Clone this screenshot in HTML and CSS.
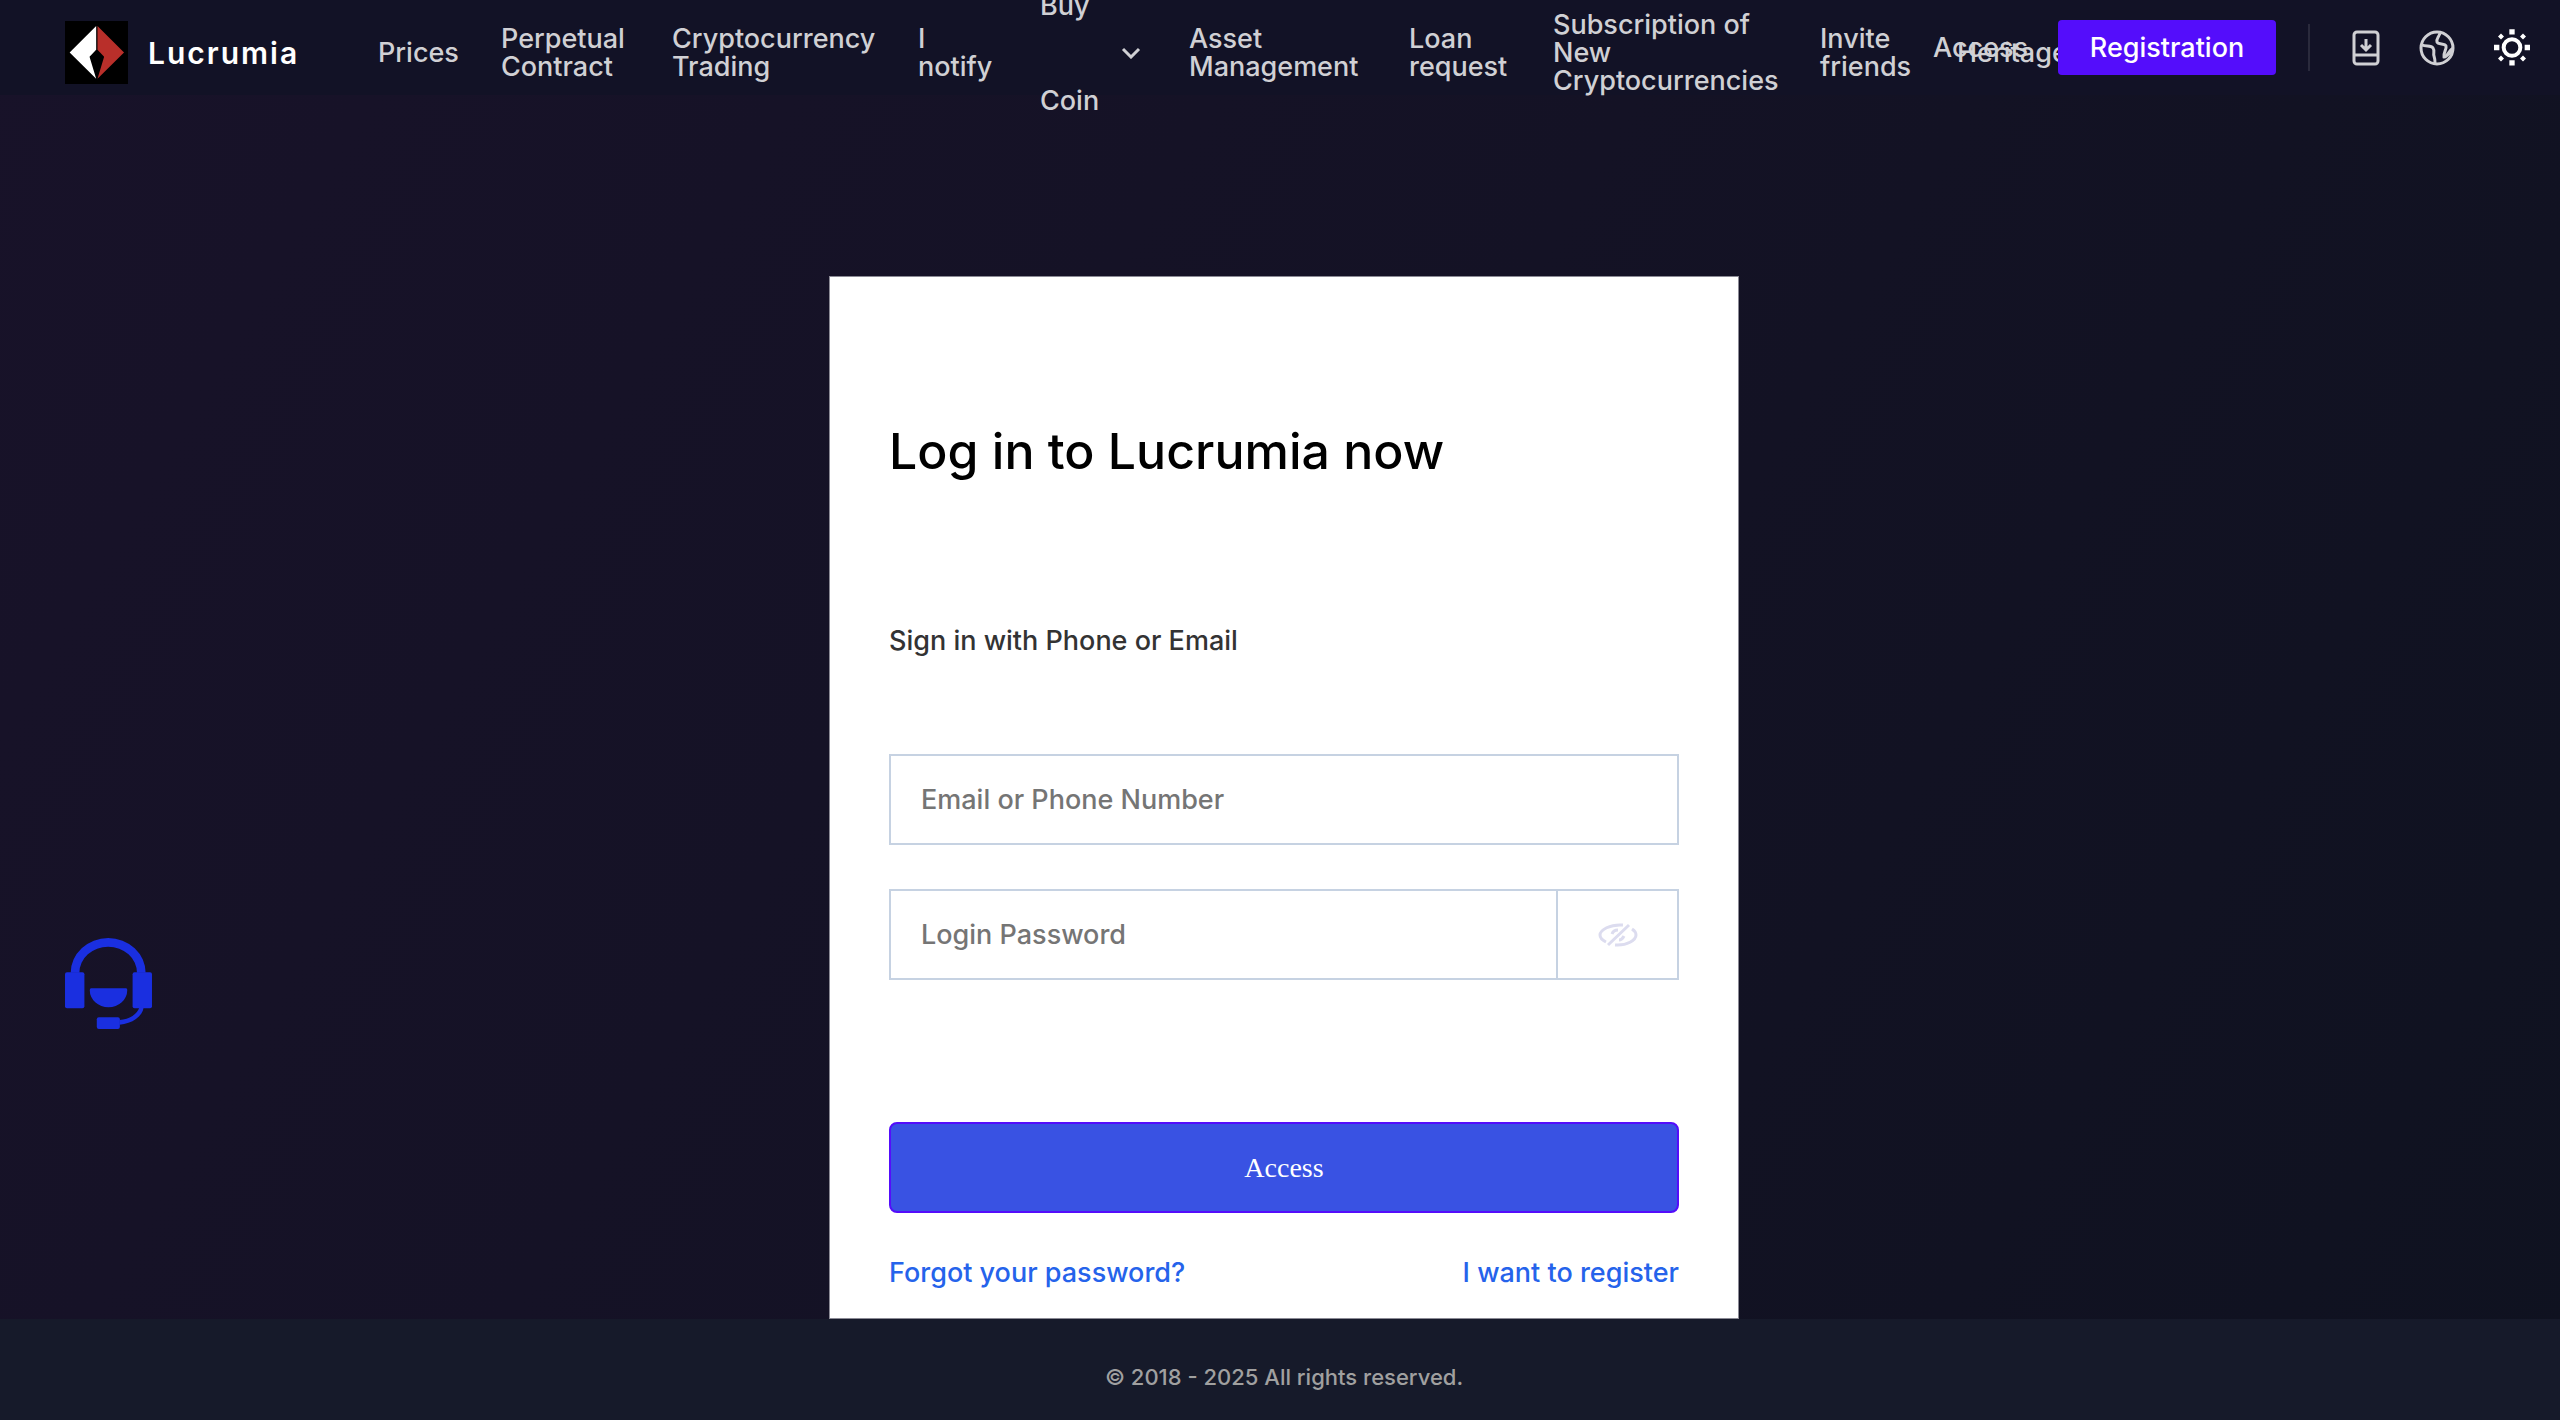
FILE: index.html
```html
<!DOCTYPE html>
<html lang="en">
<head>
    <meta charset="UTF-8">
    <meta name="viewport" content="width=device-width, initial-scale=1.0">
    <title>Lucrumia - Log in</title>
    <link rel="stylesheet" href="styles.css">
</head>
<body>

<header class="header">
    <a class="brand" href="#">
        <svg class="brand-logo" viewBox="0 0 190 190" aria-hidden="true">
            <rect width="190" height="190" fill="#000"/>
            <path d="M94 15 14 95l80 79-20-66 20-21z" fill="#fff"/>
            <path d="M98 15l80 80-80 79 20-66-20-21z" fill="#b92f2a"/>
        </svg>
        <span>Lucrumia</span>
    </a>

    <nav class="nav">
        <a href="#">Prices</a>
        <a href="#">Perpetual Contract</a>
        <a href="#">Cryptocurrency Trading</a>
        <a href="#">I notify</a>
        <a class="nav-drop" href="#">
            <span>Buy Coin</span>
            <svg viewBox="0 0 20 12" aria-hidden="true"><path d="M2 2l8 8 8-8"/></svg>
        </a>
        <a href="#">Asset Management</a>
        <a href="#">Loan request</a>
        <a href="#">Subscription of New Cryptocurrencies</a>
        <a href="#">Invite friends</a>
        <a href="#">Heritage</a>
    </nav>

    <div class="actions">
        <a class="access" href="#">Access</a>
        <button class="register" type="button">Registration</button>
        <span class="divider"></span>
        <button class="icon-btn" type="button" aria-label="Download">
            <svg width="28" height="36" viewBox="0 0 28 36">
                <rect x="2" y="2" width="24" height="32" rx="3"/>
                <path d="M2 25h24M14 9v10M9 15l5 5 5-5"/>
            </svg>
        </button>
        <button class="icon-btn" type="button" aria-label="Language">
            <svg width="36" height="36" viewBox="0 0 36 36">
                <circle cx="18" cy="18" r="16"/>
                <path d="M21 3c-1 4-4 6-3 9s8 1 9 4-3 7-2 11c3 1 4-6 9-9M3 15c4 2 9 0 11 3s0 5 1 8c1 3 1 4 1 7M26 27c3-2 6-4 7-8"/>
            </svg>
        </button>
        <button class="icon-btn sun" type="button" aria-label="Theme">
            <svg width="36" height="37" viewBox="0 0 108 110">
                <circle cx="54" cy="55" r="25"/>
                <path d="M46 0h16v16H46zM46 93h16v16H46zM0 47h16v16H0zM92 47h16v16H92zM21 13l9 9-9 9-9-9zM87 13l9 9-9 9-9-9zM21 79l9 9-9 9-9-9zM87 79l9 9-9 9-9-9z"/>
            </svg>
        </button>
    </div>
</header>

<main class="main">
    <form class="card">
        <h1>Log in to Lucrumia now</h1>
        <p class="subtitle">Sign in with Phone or Email</p>
        <div class="field">
            <input type="text" placeholder="Email or Phone Number" aria-label="Email or Phone Number">
        </div>
        <div class="field">
            <input type="password" placeholder="Login Password" aria-label="Login Password">
            <button class="eye" type="button" aria-label="Show password">
                <svg width="40" height="24" viewBox="0 0 40 24">
                    <path d="M8 19C4 17 2 14 2 12 2 7 12 1 25 2M34 6c3 2 4 4 4 6 0 5-9 11-21 10M31 2 10 22M14 11c1-3 3-4 6-4M26 13c-1 2-3 4-5 4"/>
                </svg>
            </button>
        </div>
        <button class="submit" type="submit">Access</button>
        <div class="links">
            <a href="#">Forgot your password?</a>
            <a href="#">I want to register</a>
        </div>
    </form>
</main>

<footer class="footer">© 2018 - 2025 All rights reserved.</footer>

<button class="support" type="button" aria-label="Customer service">
    <svg width="87" height="91" viewBox="76 84 260 272">
        <path d="M93 188a112 104 0 0 1 224 0h-26a86 78 0 0 0-172 0z"/>
        <rect x="76" y="186" width="58" height="108" rx="6"/>
        <rect x="278" y="186" width="58" height="108" rx="6"/>
        <path d="M154 234h104q5 0 4 6a56 51 0 0 1-112 0q0-6 4-6z"/>
        <rect x="171" y="321" width="69" height="35" rx="6"/>
        <path d="M298 292h13c-3 26-34 49-72 51v-14c30-1 54-18 59-37z"/>
    </svg>
</button>

</body>
</html>
```
FILE: styles.css
```css
* {
    box-sizing: border-box;
}
body {
    margin: 0;
    min-height: 100vh;
    display: flex;
    flex-direction: column;
    font-family: Inter, "Noto Sans", sans-serif;
    font-size: 27px;
    font-weight: 500;
    background: linear-gradient(120deg, #181229 0%, #141225 50%, #0f1220 100%);
}
a {
    text-decoration: none;
}
button {
    font: inherit;
    border: none;
    padding: 0;
    background: none;
    cursor: pointer;
}
svg {
    display: block;
}

/* header */
.header {
    position: relative;
    display: flex;
    height: 95px;
    padding: 10px 28px 0 65px;
    background: #121226;
}
.brand {
    display: flex;
    align-items: center;
    gap: 20px;
    width: 313px;
    color: #fff;
    font-size: 30px;
    font-weight: 600;
    letter-spacing: 2px;
}
.brand-logo {
    width: 63px;
    height: 63px;
}
.nav {
    display: grid;
    grid-template-columns: 75px 123px 198px 74px 101px 172px 96px 219px 89px auto;
    grid-template-rows: 85px;
    column-gap: 48px;
    align-items: center;
    height: 85px;
    line-height: 28px;
}
.nav a,
.access {
    color: #d0d0d4;
}
.nav .nav-drop {
    display: flex;
    align-items: center;
    justify-content: space-between;
    line-height: 95px;
}
.nav-drop span {
    width: 60px;
}
.nav-drop svg {
    width: 20px;
    height: 12px;
    fill: none;
    stroke: #d0d0d4;
    stroke-width: 3;
}
.actions {
    position: absolute;
    top: 0;
    right: 30px;
    display: flex;
    align-items: center;
    height: 95px;
}
.access {
    margin-right: 30px;
}
.register {
    width: 218px;
    height: 55px;
    border-radius: 4px;
    background: #540dfb;
    color: #fff;
}
.divider {
    width: 2px;
    height: 47px;
    margin: 0 42px 0 32px;
    background: #2a2a3c;
}
.icon-btn {
    margin-right: 39px;
}
.icon-btn svg {
    fill: none;
    stroke: #d0d0d4;
    stroke-width: 3;
}
.icon-btn.sun {
    margin-right: 0;
}
.sun circle {
    stroke: #fff;
    stroke-width: 12;
}
.sun path {
    fill: #fff;
    stroke: none;
}

/* login card */
.main {
    flex: 1;
    display: flex;
    justify-content: center;
    padding: 181px 0 0 8px;
}
.card {
    width: 910px;
    padding: 139px 59px 0;
    background: #fff;
    border: 1px solid #8b8a95;
}
h1 {
    margin: 0;
    font-size: 50px;
    font-weight: 500;
    line-height: 70px;
    color: #000;
}
.subtitle {
    margin: 135px 0 93px;
    line-height: 40px;
    color: #333;
}
.field {
    display: flex;
    height: 91px;
    margin-bottom: 44px;
    border: 2px solid #c6d2e2;
}
.field input {
    flex: 1;
    min-width: 0;
    padding: 0 30px;
    border: none;
    outline: none;
    background: none;
    font: inherit;
    color: #333;
}
.field input::placeholder {
    color: #757575;
    opacity: 1;
}
.eye {
    display: flex;
    align-items: center;
    justify-content: center;
    width: 121px;
    border-left: 2px solid #c6d2e2;
}
.eye svg {
    fill: none;
    stroke: #dcdcef;
    stroke-width: 3;
}
.submit {
    width: 100%;
    height: 91px;
    margin-top: 98px;
    border: 2px solid #540dfb;
    border-radius: 8px;
    background: #3952e3;
    color: #fff;
    font-family: "Liberation Serif", serif;
    font-size: 28px;
    font-weight: 400;
}
.links {
    display: flex;
    justify-content: space-between;
    padding: 40px 0 25px;
    line-height: 40px;
}
.links a {
    color: #2563eb;
}

.footer {
    padding: 38px 0 23px 8px;
    background: #161a2a;
    color: #a0a0a0;
    font-size: 22px;
    line-height: 40px;
    text-align: center;
}

/* floating support button */
.support {
    position: fixed;
    left: 65px;
    bottom: 391px;
}
.support svg {
    fill: #1a2fe0;
}
```
